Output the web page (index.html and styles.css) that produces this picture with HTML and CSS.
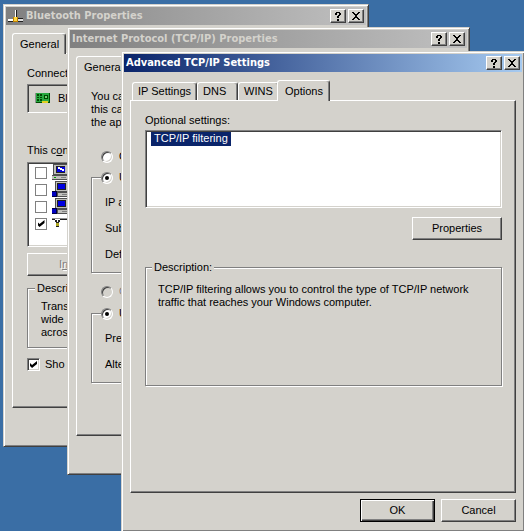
FILE: index.html
```
<!DOCTYPE html>
<html lang="en">
<head>
  <meta charset="utf-8">
  <title>Advanced TCP/IP Settings</title>
  <link rel="stylesheet" href="styles.css">
</head>
<body>
  <svg class="defs" width="0" height="0">
    <symbol id="help" viewBox="0 0 14 12">
      <path d="M5 2h4v1H5zM4 3h2v2H4zM8 3h2v2H8zM7 5h2v1H7zM6 6h2v2H6zM6 9h2v2H6z"/>
    </symbol>
    <symbol id="close" viewBox="0 0 14 12">
      <path d="M3 2h2v1H3zM9 2h2v1H9zM4 3h2v1H4zM8 3h2v1H8zM5 4h4v1H5zM6 5h2v2H6zM5 7h4v1H5zM4 8h2v1H4zM8 8h2v1H8zM3 9h2v1H3zM9 9h2v1H9z"/>
    </symbol>
    <symbol id="client" viewBox="0 0 18 17">
      <path fill="#505050" d="M1 0h15v11H1zM0 11h17v5H0z"/>
      <path fill="#c0c0bc" d="M2 1h13v9H2zM0 12h16v3H0z"/>
      <path fill="#202020" d="M4 2h9v7H4z"/>
      <path fill="#0000e0" d="M5 3h8v5H5z"/>
      <path fill="#fff" d="M6 3h2v1h2v1h2v2h-2V6H8V5H6z"/>
      <path fill="#808080" d="M9 13h5v1H9z"/>
      <path fill="#00a000" d="M2 13h2v1H2z"/>
    </symbol>
    <symbol id="service" viewBox="0 0 18 17">
      <path fill="#505050" d="M3 0h14v11H3zM5 11h12v5H5z"/>
      <path fill="#c0c0bc" d="M4 1h12v9H4zM6 12h11v3H6z"/>
      <path fill="#202020" d="M5 2h9v7H5z"/>
      <path fill="#0000e0" d="M6 3h7v5H6z"/>
      <path fill="#808080" d="M10 13h5v1h-5z"/>
      <path fill="#000040" d="M0 10h5v6H0z"/>
      <path fill="#0000c0" d="M0 11h4v4H0z"/>
    </symbol>
    <symbol id="protocol" viewBox="0 0 18 17">
      <path fill="#909090" d="M0 3h18v1H0z"/>
      <path fill="#202020" d="M0 4h3v1H0zM8 4h10v1H8zM3 5h2v2H3zM6 5h2v2H6zM4 7h3v5H4z"/>
      <path fill="#b0a820" d="M4 8h3v3H4z"/>
    </symbol>
  </svg>

  <section class="window bluetooth">
    <header class="title">
      <svg class="title-icon" width="16" height="16" viewBox="0 0 16 16">
        <path fill="#fff" d="M7 2h1v8H7zM0 11h5v2H0z"/>
        <path fill="#202020" d="M8 2h1v8H8zM0 13h15v1H0zM10 10h5v1h-5z"/>
        <path fill="#e0e0e0" d="M10 11h5v2h-5z"/>
        <path fill="#c08000" d="M5 9h5v5H5z"/>
        <path fill="#ffd840" d="M6 9h3v4H6z"/>
      </svg>
      <h1>Bluetooth Properties</h1>
      <button class="caption" aria-label="Help"><svg><use href="#help"/></svg></button>
      <button class="caption" aria-label="Close"><svg><use href="#close"/></svg></button>
    </header>
    <div class="body">
      <div class="tabs"><button class="tab active">General</button></div>
      <div class="panel">
        <p>Connect using:</p>
        <div class="adapter">
          <svg width="16" height="14" viewBox="0 0 16 14">
            <path fill="#004800" d="M1 1h14v10H1z"/>
            <path fill="#28a840" d="M1 1h13v9H1z"/>
            <path fill="#004800" d="M2 2h2v2H2zM5 2h2v2H5zM2 5h2v1H2zM5 5h2v1H5zM2 7h2v2H2zM5 7h2v2H5zM9 3h4v4H9z"/>
            <path fill="#70d070" d="M10 4h2v2h-2z"/>
            <path fill="#e0d020" d="M7 9h6v2H7z"/>
            <path fill="#909090" d="M0 1h1v10H0z"/>
          </svg>
          Bluetooth LAN
        </div>
        <p>This c<u>o</u>nnection uses:</p>
        <ul class="items">
          <li><label><input type="checkbox"><svg><use href="#client"/></svg>Client</label></li>
          <li><label><input type="checkbox"><svg><use href="#service"/></svg>Balancing</label></li>
          <li><label><input type="checkbox"><svg><use href="#service"/></svg>Sharing</label></li>
          <li><label><input type="checkbox" checked><svg><use href="#protocol"/></svg>TCP/IP</label></li>
        </ul>
        <div class="actions"><button class="button" disabled>I<u>n</u>stall...</button></div>
        <fieldset>
          <legend>Description</legend>
          <p>Transmission<br>wide area<br>across diverse</p>
        </fieldset>
        <label class="show"><input type="checkbox" checked>Sho<u>w</u> icon</label>
      </div>
      <footer><button class="button">OK</button><button class="button">Cancel</button></footer>
    </div>
  </section>

  <section class="window protocol">
    <header class="title">
      <h1>Internet Protocol (TCP/IP) Properties</h1>
      <button class="caption" aria-label="Help"><svg><use href="#help"/></svg></button>
      <button class="caption" aria-label="Close"><svg><use href="#close"/></svg></button>
    </header>
    <div class="body">
      <div class="tabs"><button class="tab active">General</button></div>
      <div class="panel">
        <p>You can get<br>this capability<br>the appropriate</p>
        <label class="choice"><input type="radio" name="ip">O<u>b</u>tain</label>
        <fieldset>
          <legend><label class="choice"><input type="radio" name="ip" checked>U<u>s</u>e</label></legend>
          <p>IP address:</p>
          <p>Subnet mask:</p>
          <p>Default gateway:</p>
        </fieldset>
        <label class="choice disabled"><input type="radio" name="dns" disabled>O<u>b</u>tain</label>
        <fieldset>
          <legend><label class="choice"><input type="radio" name="dns" checked>Us<u>e</u></label></legend>
          <p>Preferred:</p>
          <p>Alternate:</p>
        </fieldset>
      </div>
      <footer><button class="button">OK</button><button class="button">Cancel</button></footer>
    </div>
  </section>

  <section class="window advanced">
    <header class="title">
      <h1>Advanced TCP/IP Settings</h1>
      <button class="caption" aria-label="Help"><svg><use href="#help"/></svg></button>
      <button class="caption" aria-label="Close"><svg><use href="#close"/></svg></button>
    </header>
    <div class="body">
      <div class="tabs">
        <button class="tab">IP Settings</button>
        <button class="tab">DNS</button>
        <button class="tab">WINS</button>
        <button class="tab active">Options</button>
      </div>
      <div class="panel">
        <label for="optional">Optional settings:</label>
        <select id="optional" size="5">
          <option selected>TCP/IP filtering</option>
        </select>
        <button class="button properties">Properties</button>
        <fieldset>
          <legend>Description:</legend>
          <p>TCP/IP filtering allows you to control the type of TCP/IP network traffic that reaches your Windows computer.</p>
        </fieldset>
      </div>
      <footer><button class="button default">OK</button><button class="button">Cancel</button></footer>
    </div>
  </section>
</body>
</html>
```
FILE: styles.css
```
:root {
  --face: #d4d2cc;
  --shadow: #808080;
  --dark: #404040;
}
* { box-sizing: border-box; }
html, body { height: 100%; margin: 0; }
body {
  position: relative; overflow: hidden;
  background: #3a6ea5; color: #000;
  font: 11px/13px "Liberation Sans", Arial, sans-serif;
}
button, input, select { font: inherit; color: inherit; margin: 0; }
p { margin: 0; }
svg { flex: none; shape-rendering: crispEdges; }
.defs { position: absolute; }

/* windows */
.window {
  position: absolute; display: flex; flex-direction: column;
  padding: 2px; background: var(--face);
  border: 1px solid; border-color: var(--face) var(--dark) var(--dark) var(--face);
  box-shadow: inset 1px 1px #fff, inset -1px -1px var(--shadow);
  white-space: nowrap;
}
.bluetooth { left: 3px; top: 4px; right: 155px; bottom: 84px; }
.protocol { left: 67px; top: 27px; right: 54px; bottom: 56px; }
.advanced { left: 121px; top: 51px; right: -1px; bottom: -1px; }

.title {
  display: flex; align-items: center; height: 18px; padding: 0 2px;
  background: linear-gradient(to right, #808080, #c0c0c0); color: var(--face);
}
.advanced .title { background: linear-gradient(to right, #0a246a, #a6caf0); color: #fff; }
.title h1 {
  flex: 1; margin: 0;
  font: bold 11px/16px "DejaVu Sans Condensed", "DejaVu Sans", sans-serif;
}
.title-icon { margin-right: 2px; }
.caption {
  width: 16px; height: 14px; padding: 0; background: var(--face); color: #000;
  border: 1px solid; border-color: #fff var(--dark) var(--dark) #fff;
  box-shadow: inset -1px -1px var(--shadow);
}
.caption + .caption { margin-left: 2px; }
.caption svg { display: block; width: 14px; height: 12px; }

.body { flex: 1; display: flex; flex-direction: column; padding: 8px 6px 7px; }
footer { display: flex; justify-content: flex-end; gap: 6px; margin-top: 6px; }

/* tabs */
.tabs { display: flex; align-items: flex-end; height: 20px; padding-left: 2px; }
.tab {
  min-width: 41px; height: 18px; padding: 0 5px; background: var(--face); text-align: left;
  border: 1px solid; border-color: #fff var(--dark) transparent #fff; border-bottom: 0;
  border-radius: 3px 3px 0 0;
  box-shadow: inset -1px 0 var(--shadow);
}
.tab.active {
  position: relative; height: 21px; margin: 0 0 -1px -2px; padding: 0 6px 0 7px;
}
.panel {
  flex: 1; display: flex; flex-direction: column; padding: 13px 13px 14px 14px;
  border: 1px solid; border-color: #fff var(--dark) var(--dark) #fff;
  box-shadow: inset -1px -1px var(--shadow);
}

/* controls */
.button {
  width: 75px; height: 23px; padding: 0; background: var(--face);
  border: 1px solid; border-color: #fff var(--dark) var(--dark) #fff;
  box-shadow: inset -1px -1px var(--shadow);
}
.button.default {
  border-color: #000;
  box-shadow: inset 1px 1px #fff, inset -1px -1px var(--dark), inset -2px -2px var(--shadow);
}
.button:disabled, .disabled { color: var(--shadow); text-shadow: 1px 1px #fff; }
.properties { width: 90px; margin-top: 9px; align-self: flex-end; }

select, .items, .adapter {
  border: 1px solid; border-color: var(--shadow) #fff #fff var(--shadow);
  box-shadow: inset 1px 1px var(--dark), inset -1px -1px var(--face);
}
select {
  appearance: none; width: 100%; height: 78px; margin-top: 3px; padding: 1px 5px;
  border-radius: 0; background: #fff; outline: 0; overflow: hidden;
}
option { width: 80px; min-height: 14px; padding: 0 3px; line-height: 14px; }
option:checked { background: #0a246a linear-gradient(#0a246a, #0a246a); color: #fff; }

fieldset {
  margin: 0; padding: 0 12px; min-width: 0;
  border: 1px solid var(--shadow);
  box-shadow: inset 1px 1px #fff, 1px 1px #fff;
}
legend { margin-left: -6px; padding: 0 2px; background: var(--face); }

input[type=checkbox] {
  appearance: none; display: grid; place-items: center; flex: none;
  width: 13px; height: 13px; background: #fff;
  border: 1px solid; border-color: var(--shadow) #fff #fff var(--shadow);
  box-shadow: inset 1px 1px var(--dark), inset -1px -1px var(--face);
}
input[type=checkbox]:checked::before {
  content: ""; width: 7px; height: 7px; background: #000;
  clip-path: polygon(0 29%, 29% 58%, 100% 0, 100% 43%, 29% 100%, 0 71%);
}
input[type=radio] {
  appearance: none; display: grid; place-items: center; flex: none;
  width: 12px; height: 12px; border-radius: 50%; background: #fff;
  border: 1px solid; border-color: var(--shadow) #fff #fff var(--shadow);
  box-shadow: inset 1px 1px var(--dark), inset -1px -1px var(--face);
}
input[type=radio]:disabled { background: var(--face); }
input[type=radio]:checked::before {
  content: ""; width: 4px; height: 4px; border-radius: 50%; background: #000;
}

/* advanced settings */
.advanced fieldset { height: 125px; margin-top: 21px; white-space: normal; }
.advanced fieldset p { margin-top: 9px; }

/* connection properties */
.adapter { display: flex; align-items: center; gap: 7px; height: 29px; margin: 4px 0 31px; padding: 0 7px; }
.items {
  height: 85px; margin: 5px 0 0; padding: 1px 7px; background: #fff; list-style: none;
}
.items label { display: flex; align-items: center; height: 17px; }
.items input[type=checkbox] { width: 12px; height: 12px; border-color: var(--shadow); box-shadow: none; }
.items svg { width: 18px; height: 17px; margin: 0 4px 0 5px; }
.actions { margin-top: 6px; }
.actions .button { width: 102px; }
.bluetooth fieldset { height: 66px; margin-top: 6px; padding: 0 13px; }
.bluetooth fieldset p { margin-top: 5px; }
.show { display: flex; align-items: center; gap: 5px; margin-top: 10px; }

/* protocol properties */
.choice { display: flex; align-items: center; gap: 6px; height: 13px; }
.protocol .panel > .choice { margin: 21px 0 8px 10px; }
.protocol .panel > .choice.disabled { margin: 12px 0 9px 10px; }
.protocol fieldset { padding: 0 13px; }
.protocol legend { margin-left: -4px; padding: 0 2px 0 0; }
.protocol fieldset p { margin: 0 0 13px; }
.protocol legend + p { margin-top: 12px; }
.protocol fieldset p:last-child { margin-bottom: 11px; }
```
